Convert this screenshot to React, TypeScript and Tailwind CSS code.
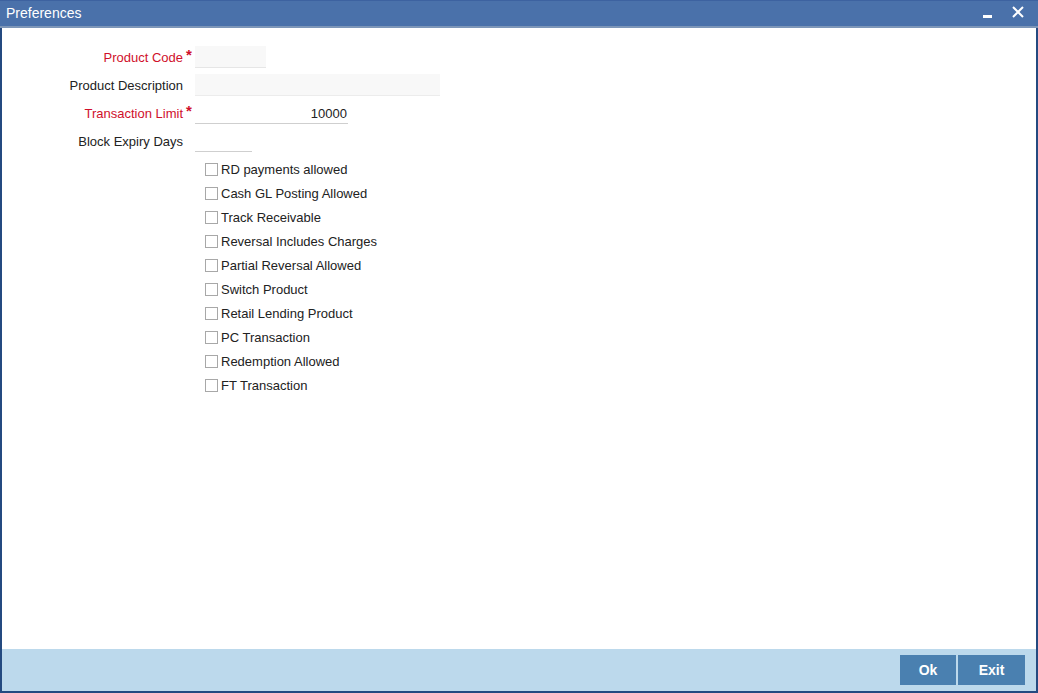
import React from 'react';

const CHECKS = [
  'RD payments allowed',
  'Cash GL Posting Allowed',
  'Track Receivable',
  'Reversal Includes Charges',
  'Partial Reversal Allowed',
  'Switch Product',
  'Retail Lending Product',
  'PC Transaction',
  'Redemption Allowed',
  'FT Transaction',
];

const Field: React.FC<{ label: string; required?: boolean; children: React.ReactNode }> = ({ label, required, children }) => (
  <div className="flex items-center h-[28px]">
    <div className={`w-[181px] text-right pt-[2px] ${required ? 'text-[#d0102b]' : 'text-[#222]'}`}>{label}</div>
    <div className="w-[12px] text-[#d0102b] pl-[3px] self-start pt-[1px] text-[15px] font-bold">{required ? '*' : ''}</div>
    {children}
  </div>
);

export default function App() {
  return (
    <div
      className="w-[1038px] h-[693px] flex flex-col bg-white border-x-2 border-b-2 border-[#244a80] text-[13px]"
      style={{ fontFamily: '"Liberation Sans", Arial, sans-serif' }}
    >
      {/* Title bar */}
      <div className="h-[28px] bg-[#4a71aa] border-b-2 border-[#7d96b8] flex items-center justify-between pl-[4px] pr-[14px] -mx-[2px] border-t border-t-[#3d62a0]">
        <span className="text-white text-[14px] pl-[2px]">Preferences</span>
        <div className="flex items-center gap-[20px] text-white">
          <span className="w-[9px] h-[3px] bg-white mt-[6px]"></span>
          <svg width="12" height="12" viewBox="0 0 12 12" className="mb-[4px]">
            <path d="M1 1 L11 11 M11 1 L1 11" stroke="white" strokeWidth="2" />
          </svg>
        </div>
      </div>

      {/* Body */}
      <div className="flex-1 pt-[15px]">
        <Field label="Product Code" required>
          <div className="w-[71px] h-[22px] bg-[#f8f8f8] border-b border-[#e6e6e6]"></div>
        </Field>
        <Field label="Product Description">
          <div className="w-[245px] h-[22px] bg-[#f8f8f8] border-b border-[#ececec]"></div>
        </Field>
        <Field label="Transaction Limit" required>
          <div className="w-[153px] h-[22px] border-b border-[#cfcfcf] text-right pr-[1px] pt-[1px] text-[#222] leading-[22px]">10000</div>
        </Field>
        <Field label="Block Expiry Days">
          <div className="w-[57px] h-[22px] border-b border-[#cfcfcf]"></div>
        </Field>

        <div className="pl-[203px] pt-[2px]">
          {CHECKS.map((c) => (
            <div key={c} className="flex items-center h-[24px]">
              <span className="w-[13px] h-[13px] border border-[#a8a8a8] bg-white mr-[3px]"></span>
              <span className="text-[#222] pt-[1px]">{c}</span>
            </div>
          ))}
        </div>
      </div>

      {/* Footer */}
      <div className="h-[42px] bg-[#bcd9ec] flex items-center justify-end pr-[11px]">
        <button className="w-[58px] h-[30px] bg-[#4a80b0] text-white font-bold text-[14px] border-r-2 border-[#bcd9ec]">Ok</button>
        <button className="w-[67px] h-[30px] bg-[#4a80b0] text-white font-bold text-[14px]">Exit</button>
      </div>
    </div>
  );
}
